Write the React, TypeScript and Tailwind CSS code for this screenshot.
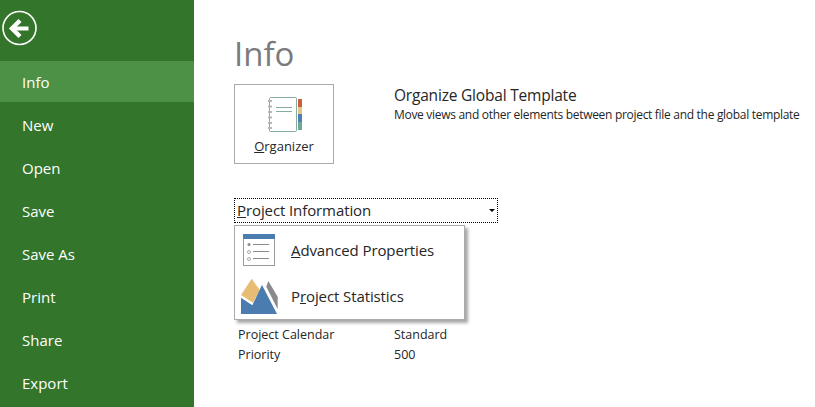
import React from 'react';

const navItems = ['New', 'Open', 'Save', 'Save As', 'Print', 'Share', 'Export'];

const BackIcon = () => (
	<svg width="36" height="36" viewBox="0 0 36 36" fill="none">
		<circle cx="18.5" cy="18" r="16.5" stroke="#fff" strokeWidth="1.6" />
		<path d="M27.5 18.5H13" stroke="#fff" strokeWidth="4" />
		<path d="M19 10.5L11 18.5L19 26.5" stroke="#fff" strokeWidth="4.4" />
	</svg>
);

const NotebookIcon = () => (
	<svg width="36" height="36" viewBox="0 0 36 36" fill="none">
		<rect x="3.5" y="0.5" width="27" height="34" rx="1" fill="#fff" stroke="#86aca4" />
		<path d="M10 10.5H26M10 14.5H26" stroke="#86aca4" />
		<path d="M2 4H6M2 9.5H6M2 15H6M2 20.5H6M2 26H6M2 31H6" stroke="#b5b5b5" strokeWidth="2" />
		<rect x="32" y="2" width="4" height="8" fill="#c8603f" />
		<rect x="32" y="10" width="4" height="7" fill="#e3c588" />
		<rect x="32" y="17" width="4" height="8" fill="#4f7fb5" />
		<rect x="32" y="25" width="4" height="8" fill="#6fa894" />
	</svg>
);

const PropertiesIcon = () => (
	<svg width="32" height="32" viewBox="0 0 32 32" fill="none">
		<rect x="0.5" y="0.5" width="31" height="31" fill="#fff" stroke="#9a9a9a" />
		<rect x="0" y="0" width="32" height="5" fill="#4a7cb0" />
		<circle cx="6" cy="10.5" r="1.5" fill="#8a8a8a" />
		<circle cx="6" cy="18" r="1.5" stroke="#aaa" />
		<circle cx="6" cy="25" r="1.5" stroke="#aaa" />
		<path d="M10 10.5H26M10 17.5H26M10 24.5H26" stroke="#8a8a8a" />
	</svg>
);

const StatisticsIcon = () => (
	<svg width="37" height="37" viewBox="0 0 37 37" fill="none">
		<path d="M0 17L10.7 0.7L18.7 12L12 24.7Z" fill="#e6bd72" />
		<path d="M27.3 3L36.7 18.7V31.3L25.3 8.7Z" fill="#8a8a8a" />
		<path d="M0 19.7L11.3 27.3L21.3 6.3L36.7 36H0Z" fill="#4a7cb0" />
		<path d="M21.3 6.3L36.7 36" stroke="#fff" strokeWidth="1.2" />
	</svg>
);

const App = () => {
	return (
		<div className="flex w-[815px] h-[407px] overflow-hidden bg-white text-[#262626] font-['Open_Sans',sans-serif]">
			{/* sidebar */}
			<aside className="w-[194px] shrink-0 bg-[#33752a] text-white text-[15px]">
				<div className="h-[61px] pt-[10px] pl-[1px]">
					<BackIcon />
				</div>
				<div className="h-[41px] pl-[22px] pt-[1px] flex items-center bg-[#4c9145]">Info</div>
				<div className="flex flex-col pt-[2px]">
					{navItems.map((item) => (
						<div key={item} className="h-[43px] pl-[22px] flex items-center">
							{item}
						</div>
					))}
				</div>
			</aside>

			{/* main */}
			<main className="flex-1 pl-[40px] pt-[32px]">
				<h1 className="text-[33px] leading-[44px] text-[#7b7b7b] h-[52px]">Info</h1>

				<div className="flex">
					<button className="w-[100px] h-[80px] border border-[#ababab] flex flex-col items-center pt-[12px] text-[13px]">
						<NotebookIcon />
						<span className="mt-[5px] leading-[16px]">
							<u>O</u>rganizer
						</span>
					</button>
					<div className="ml-[60px]">
						<div className="text-[15.5px] leading-[22px] tracking-[-0.2px]">Organize Global Template</div>
						<div className="text-[12px] leading-[16px] mt-[1px] tracking-[-0.3px]">
							Move views and other elements between project file and the global template
						</div>
					</div>
				</div>

				{/* dropdown */}
				<div className="relative mt-[34px] w-[264px]">
					<div className="h-[25px] border border-dotted border-black flex items-center justify-between pl-[2px] pr-[1px] text-[15px]">
						<span className="tracking-[-0.1px]">
							<u>P</u>roject Information
						</span>
						<span className="w-0 h-0 border-x-[3px] border-x-transparent border-t-[3px] border-t-black mr-[1px]"></span>
					</div>

					<div className="absolute left-0 top-[27px] w-[231px] h-[95px] bg-white border border-[#ababab] shadow-[3px_3px_3px_rgba(0,0,0,0.35)] flex flex-col z-10 text-[15px] tracking-[-0.1px]">
						<div className="h-[47px] flex items-center pl-[8px]">
							<PropertiesIcon />
							<span className="ml-[16px] pt-[2px]">
								<u>A</u>dvanced Properties
							</span>
						</div>
						<div className="h-[46px] flex items-center pl-[6px]">
							<StatisticsIcon />
							<span className="ml-[13px]">
								P<u>r</u>oject Statistics
							</span>
						</div>
					</div>
				</div>

				{/* project fields */}
				<div className="mt-[102px] text-[12.5px] leading-[20px]">
					<div className="flex pl-[4px]">
						<span className="w-[156px]">Project Calendar</span>
						<span>Standard</span>
					</div>
					<div className="flex pl-[4px]">
						<span className="w-[156px]">Priority</span>
						<span>500</span>
					</div>
				</div>
			</main>
		</div>
	);
};

export default App;
